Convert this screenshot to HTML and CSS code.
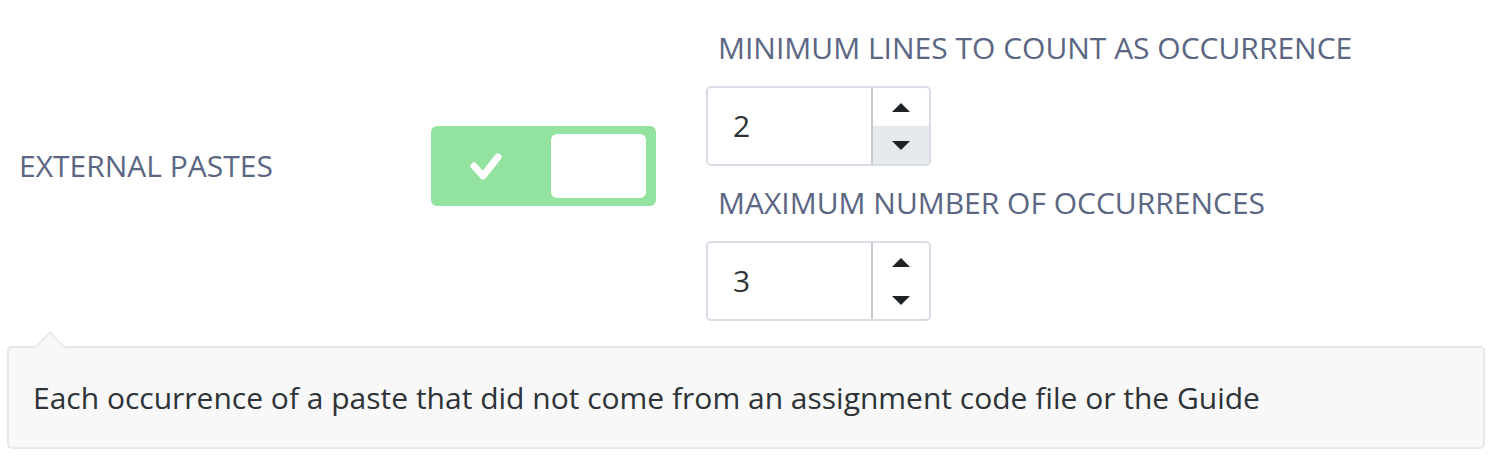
FILE: index.html
```html
<!DOCTYPE html>
<html>
<head>
<meta charset="utf-8">
<link rel="stylesheet" href="styles.css">
</head>
<body>
<div class="row">
  <div class="left">
    <div class="label">EXTERNAL PASTES</div>
    <div class="toggle">
      <svg class="check" width="40" height="34" viewBox="0 0 40 34"><path d="M8 17 L17 27 L32 8" fill="none" stroke="#fff" stroke-width="7" stroke-linecap="round" stroke-linejoin="round"/></svg>
      <div class="knob"></div>
    </div>
  </div>
  <div class="fields">
    <div class="flabel first">MINIMUM LINES TO COUNT AS OCCURRENCE</div>
    <div class="numbox">
      <div class="value">2</div>
      <div class="spin">
        <div class="sbtn"><span class="up"></span></div>
        <div class="sbtn hover"><span class="down"></span></div>
      </div>
    </div>
    <div class="flabel">MAXIMUM NUMBER OF OCCURRENCES</div>
    <div class="numbox">
      <div class="value">3</div>
      <div class="spin">
        <div class="sbtn"><span class="up"></span></div>
        <div class="sbtn"><span class="down"></span></div>
      </div>
    </div>
  </div>
</div>
<div class="tip">
  <div class="arrow"></div>
  <div class="tiptext">Each occurrence of a paste that did not come from an assignment code file or the Guide</div>
</div>
</body>
</html>
```
FILE: styles.css
```css
html, body { margin: 0; padding: 0; background: #fff; }
body { font-family: "Open Sans", "Noto Sans", sans-serif; width: 1494px; height: 462px; overflow: hidden; }
.row { display: flex; align-items: flex-start; padding-top: 28px; }
.left { display: flex; align-items: center; height: 80px; margin-top: 98px; padding-left: 19px; }
.label { width: 412px; font-size: 30px; line-height: 40px; color: #5b6683; }
.toggle { width: 225px; height: 80px; background: #92e3a0; border-radius: 6px; display: flex; align-items: center; box-sizing: border-box; padding: 8px 10px 8px 0; }
.check { margin-left: 35px; margin-right: 45px; }
.knob { flex: 1; height: 64px; background: #fff; border-radius: 6px; }
.fields { margin-left: 50px; display: flex; flex-direction: column; }
.flabel { font-size: 30px; line-height: 40px; color: #5b6683; padding-left: 12px; margin: 17px 0 18px; }
.flabel.first { margin-top: 0; }
.numbox { width: 225px; height: 80px; box-sizing: border-box; border: 2px solid #d9dce4; border-radius: 5px; display: flex; overflow: hidden; }
.value { flex: 1; font-size: 30px; color: #2e3235; padding-left: 25px; line-height: 76px; border-right: 2px solid #c9c9c9; }
.spin { width: 56px; display: flex; flex-direction: column; }
.sbtn { flex: 1; display: flex; align-items: center; justify-content: center; }
.sbtn.hover { background: #e6e9ec; }
.up { width: 0; height: 0; border-left: 9px solid transparent; border-right: 9px solid transparent; border-bottom: 9px solid #1f2224; }
.down { width: 0; height: 0; border-left: 9px solid transparent; border-right: 9px solid transparent; border-top: 9px solid #1f2224; }
.tip { position: relative; margin: 25px 0 0 7px; width: 1478px; height: 103px; box-sizing: border-box; background: #f8f8f9; border: 2px solid #e6e8ec; border-radius: 5px; display: flex; align-items: center; }
.arrow { position: absolute; left: 30px; top: -12px; width: 20px; height: 20px; background: #f8f8f9; border-left: 2px solid #e9eaed; border-top: 2px solid #e9eaed; transform: rotate(45deg); }
.tiptext { position: relative; padding-left: 24px; font-size: 30px; color: #2e3337; }
```
